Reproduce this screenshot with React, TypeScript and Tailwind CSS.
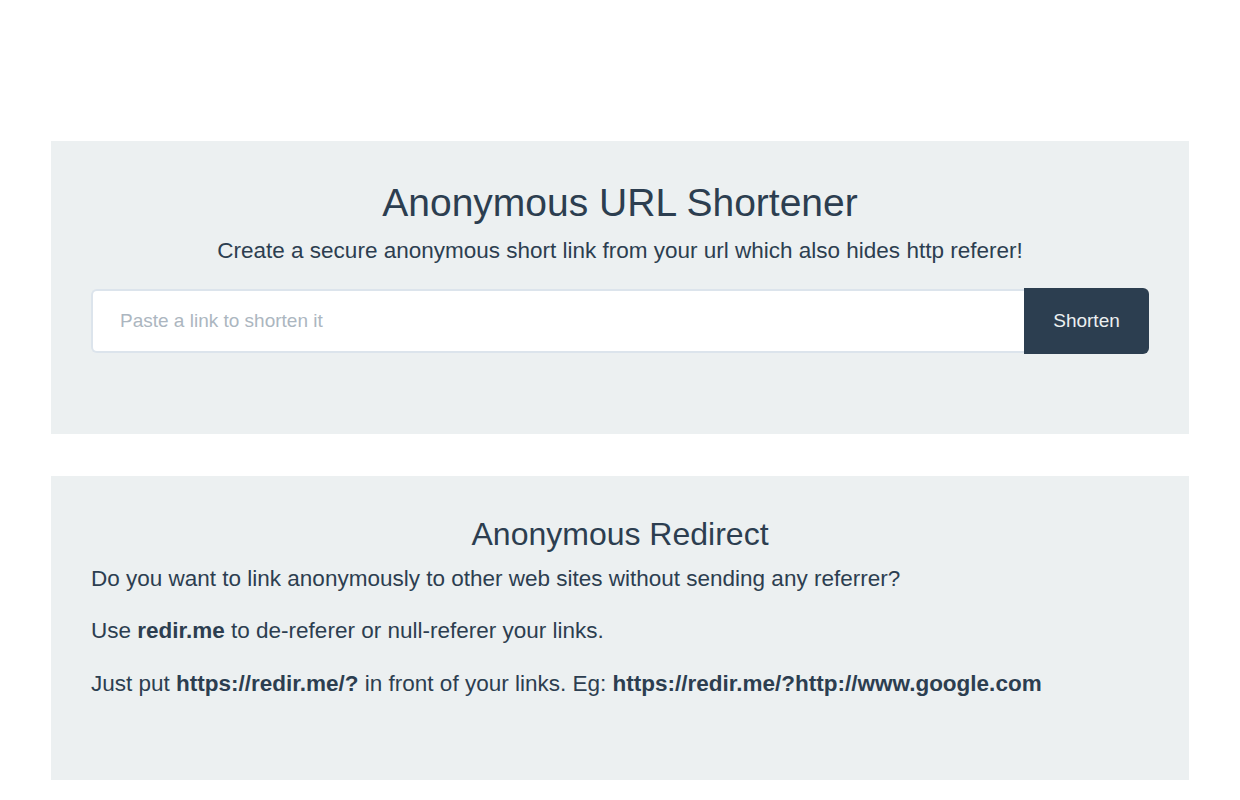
import React from "react";

export default function App() {
  return (
    <div
      className="min-h-[800px] bg-white pt-[141px] text-[#2c3e50]"
      style={{ fontFamily: '"Liberation Sans", Arial, sans-serif' }}
    >
      <div className="mx-auto w-[1138px]">
        <section className="bg-[#ecf0f1] px-[40px] pt-[40px] pb-[80px]">
          <h1 className="text-center text-[39px] leading-[43px]">Anonymous URL Shortener</h1>
          <p className="mt-[11px] text-center text-[22.5px] leading-[32px]">
            Create a secure anonymous short link from your url which also hides http referer!
          </p>
          <div className="mt-[21px] flex items-center">
            <input
              type="text"
              placeholder="Paste a link to shorten it"
              className="h-[64px] flex-1 rounded-l-[6px] border-2 border-r-0 border-[#dce4ec] bg-white px-[27px] text-[19px] text-[#2c3e50] placeholder:text-[#acb6c0] outline-none"
            />
            <button className="h-[66px] w-[125px] rounded-r-[6px] bg-[#2c3e50] text-[19px] text-[#ecf0f1]">
              Shorten
            </button>
          </div>
        </section>

        <section className="mt-[42px] bg-[#ecf0f1] px-[40px] pt-[41px] pb-[80px]">
          <h2 className="text-center text-[32px] leading-[35px]">Anonymous Redirect</h2>
          <p className="mt-[11px] text-[22.5px] leading-[32px]">
            Do you want to link anonymously to other web sites without sending any referrer?
          </p>
          <p className="mt-[20px] text-[22.5px] leading-[32px]">
            Use <b>redir.me</b> to de-referer or null-referer your links.
          </p>
          <p className="mt-[21px] text-[22.5px] leading-[32px]">
            Just put <b>https://redir.me/?</b> in front of your links. Eg:{" "}
            <b>https://redir.me/?http://www.google.com</b>
          </p>
        </section>
      </div>
    </div>
  );
}
